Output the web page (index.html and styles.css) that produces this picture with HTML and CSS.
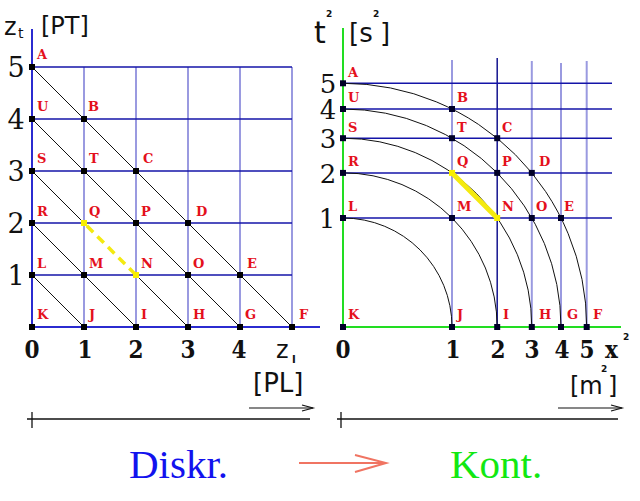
FILE: index.html
```html
<!DOCTYPE html>
<html lang="de">
<head>
<meta charset="utf-8">
<title>Diskr. → Kont.</title>
<link rel="stylesheet" href="styles.css">
</head>
<body>
<main class="figure">
<svg class="diagram" width="640" height="501" viewBox="0 0 640 501" xmlns="http://www.w3.org/2000/svg">
  <!-- ============ LEFT: discrete ============ -->
  <g class="left">
    <g class="vgrid">
      <line x1="84" y1="67" x2="84" y2="327"/>
      <line x1="136" y1="67" x2="136" y2="327"/>
      <line x1="188" y1="67" x2="188" y2="327"/>
      <line x1="240" y1="67" x2="240" y2="327"/>
      <line x1="292" y1="67" x2="292" y2="327"/>
    </g>
    <g class="hgrid">
      <line x1="32" y1="67" x2="292" y2="67"/>
      <line x1="32" y1="119" x2="292" y2="119"/>
      <line x1="32" y1="171" x2="292" y2="171"/>
      <line x1="32" y1="223" x2="292" y2="223"/>
      <line x1="32" y1="275" x2="292" y2="275"/>
    </g>
    <g class="axis-blue">
      <line x1="32" y1="29" x2="32" y2="328"/>
      <line x1="31" y1="327" x2="320" y2="327"/>
    </g>
    <g class="diag">
      <line x1="32" y1="275" x2="84" y2="327"/>
      <line x1="32" y1="223" x2="136" y2="327"/>
      <line x1="32" y1="171" x2="84" y2="223"/>
      <line x1="136" y1="275" x2="188" y2="327"/>
      <line x1="32" y1="119" x2="240" y2="327"/>
      <line x1="32" y1="67" x2="292" y2="327"/>
    </g>
    <line class="dash-yellow" x1="84" y1="223" x2="136" y2="275"/>
    <g class="pts">
      <rect x="29" y="64" width="6" height="6"/>
      <rect x="29" y="116" width="6" height="6"/>
      <rect x="81" y="116" width="6" height="6"/>
      <rect x="29" y="168" width="6" height="6"/>
      <rect x="81" y="168" width="6" height="6"/>
      <rect x="133" y="168" width="6" height="6"/>
      <rect x="29" y="220" width="6" height="6"/>
      <rect x="133" y="220" width="6" height="6"/>
      <rect x="185" y="220" width="6" height="6"/>
      <rect x="29" y="272" width="6" height="6"/>
      <rect x="81" y="272" width="6" height="6"/>
      <rect x="185" y="272" width="6" height="6"/>
      <rect x="237" y="272" width="6" height="6"/>
      <rect x="29" y="324" width="6" height="6"/>
      <rect x="81" y="324" width="6" height="6"/>
      <rect x="133" y="324" width="6" height="6"/>
      <rect x="185" y="324" width="6" height="6"/>
      <rect x="237" y="324" width="6" height="6"/>
      <rect x="289" y="324" width="6" height="6"/>
    </g>
    <g class="pts-yellow">
      <rect x="81" y="220" width="6" height="6"/>
      <rect x="133" y="272" width="6" height="6"/>
    </g>
    <g class="lbl">
      <text x="37" y="59">A</text>
      <text x="37" y="111">U</text>
      <text x="88" y="111">B</text>
      <text x="37" y="163">S</text>
      <text x="89" y="163">T</text>
      <text x="143" y="163">C</text>
      <text x="37" y="216">R</text>
      <text x="89" y="216">Q</text>
      <text x="141" y="216">P</text>
      <text x="196" y="216">D</text>
      <text x="37" y="268">L</text>
      <text x="89" y="268">M</text>
      <text x="141" y="268">N</text>
      <text x="193" y="268">O</text>
      <text x="247" y="268">E</text>
      <text x="37" y="319">K</text>
      <text x="89" y="319">J</text>
      <text x="141" y="319">I</text>
      <text x="193" y="319">H</text>
      <text x="245" y="319">G</text>
      <text x="299" y="319">F</text>
    </g>
    <g class="ynum">
      <text x="16" y="77">5</text>
      <text x="16" y="129">4</text>
      <text x="16" y="181">3</text>
      <text x="16" y="233">2</text>
      <text x="16" y="285">1</text>
    </g>
    <g class="xnum">
      <text x="32" y="358">0</text>
      <text x="85" y="358">1</text>
      <text x="136" y="358">2</text>
      <text x="188" y="358">3</text>
      <text x="239" y="358">4</text>
    </g>
    <text class="unit" x="4" y="35">z</text>
    <text class="sub" x="18" y="38">t</text>
    <text class="unit" x="41" y="34">[PT]</text>
    <text class="unit" x="276" y="358">z</text>
    <text class="sub-l" x="292" y="363">l</text>
    <text class="unit-lg" x="253" y="392">[PL]</text>
    <g class="small-arrow">
      <line x1="249" y1="408" x2="313" y2="408"/>
      <polyline points="302,405 313,408 302,411"/>
    </g>
    <g class="scale">
      <line x1="27" y1="419" x2="310" y2="419"/>
      <line x1="32" y1="412" x2="32" y2="428"/>
    </g>
  </g>

  <!-- ============ RIGHT: continuous ============ -->
  <g class="right">
    <g class="vgrid">
      <line x1="452" y1="60" x2="452" y2="327"/>
      <line x1="531.8" y1="61" x2="531.8" y2="327"/>
      <line x1="561" y1="63" x2="561" y2="327"/>
      <line x1="586.7" y1="61" x2="586.7" y2="327"/>
    </g>
    <line class="vgrid-dark" x1="497.2" y1="58" x2="497.2" y2="327"/>
    <g class="hgrid">
      <line x1="343" y1="83.3" x2="612" y2="83.3"/>
      <line x1="343" y1="109" x2="612" y2="109"/>
      <line x1="343" y1="138.2" x2="612" y2="138.2"/>
      <line x1="343" y1="172.9" x2="612" y2="172.9"/>
      <line x1="343" y1="218" x2="612" y2="218"/>
    </g>
    <g class="axis-green">
      <line x1="343" y1="28" x2="343" y2="328"/>
      <line x1="342" y1="327" x2="621" y2="327"/>
    </g>
    <g class="arc">
      <path d="M343 218 A109 109 0 0 1 452 327"/>
      <path d="M343 172.85 A154.15 154.15 0 0 1 497.15 327"/>
      <path d="M343 138.21 A188.79 188.79 0 0 1 531.79 327"/>
      <path d="M343 109 A218 218 0 0 1 561 327"/>
      <path d="M343 83.27 A243.73 243.73 0 0 1 586.73 327"/>
    </g>
    <line class="solid-yellow" x1="452" y1="172.9" x2="497.2" y2="218"/>
    <g class="pts">
      <rect x="340" y="80.3" width="6" height="6"/>
      <rect x="340" y="106" width="6" height="6"/>
      <rect x="449" y="106" width="6" height="6"/>
      <rect x="340" y="135.2" width="6" height="6"/>
      <rect x="449" y="135.2" width="6" height="6"/>
      <rect x="494.2" y="135.2" width="6" height="6"/>
      <rect x="340" y="169.9" width="6" height="6"/>
      <rect x="494.2" y="169.9" width="6" height="6"/>
      <rect x="528.8" y="169.9" width="6" height="6"/>
      <rect x="340" y="215" width="6" height="6"/>
      <rect x="449" y="215" width="6" height="6"/>
      <rect x="528.8" y="215" width="6" height="6"/>
      <rect x="558" y="215" width="6" height="6"/>
      <rect x="340" y="324" width="6" height="6"/>
      <rect x="449" y="324" width="6" height="6"/>
      <rect x="494.2" y="324" width="6" height="6"/>
      <rect x="528.8" y="324" width="6" height="6"/>
      <rect x="558" y="324" width="6" height="6"/>
      <rect x="583.7" y="324" width="6" height="6"/>
    </g>
    <g class="pts-yellow">
      <rect x="449" y="169.9" width="6" height="6"/>
      <rect x="494.2" y="215" width="6" height="6"/>
    </g>
    <g class="lbl">
      <text x="348" y="77">A</text>
      <text x="348" y="102">U</text>
      <text x="457" y="102">B</text>
      <text x="348" y="132">S</text>
      <text x="457" y="132">T</text>
      <text x="502" y="132">C</text>
      <text x="348" y="166">R</text>
      <text x="457" y="166">Q</text>
      <text x="502" y="166">P</text>
      <text x="539" y="166">D</text>
      <text x="348" y="211">L</text>
      <text x="457" y="211">M</text>
      <text x="502" y="211">N</text>
      <text x="536" y="211">O</text>
      <text x="564" y="211">E</text>
      <text x="348" y="319">K</text>
      <text x="457" y="319">J</text>
      <text x="503" y="319">I</text>
      <text x="539" y="319">H</text>
      <text x="567" y="319">G</text>
      <text x="593" y="319">F</text>
    </g>
    <g class="ynum ynum-r">
      <text x="328" y="93">5</text>
      <text x="328" y="119">4</text>
      <text x="328" y="148">3</text>
      <text x="328" y="183">2</text>
      <text x="327" y="228">1</text>
    </g>
    <g class="xnum">
      <text x="343" y="358">0</text>
      <text x="453" y="358">1</text>
      <text x="498" y="358">2</text>
      <text x="532" y="358">3</text>
      <text x="562" y="358">4</text>
      <text x="587" y="358">5</text>
    </g>
    <text class="xvar" x="605" y="358">x</text>
    <text class="sup" x="623" y="340">2</text>
    <text class="unit-t" x="314" y="43">t</text>
    <text class="sup" x="326" y="17">2</text>
    <text class="unit-lg" x="349" y="42">[s</text>
    <text class="sup" x="373" y="17">2</text>
    <text class="unit-lg" x="380" y="42">]</text>
    <text class="unit-m" x="570" y="394">[m</text>
    <text class="sup" x="601" y="372">2</text>
    <text class="unit-m" x="608" y="394">]</text>
    <g class="small-arrow">
      <line x1="558" y1="408" x2="622" y2="408"/>
      <polyline points="611,405 622,408 611,411"/>
    </g>
    <g class="scale">
      <line x1="337" y1="419" x2="618" y2="419"/>
      <line x1="341" y1="412" x2="341" y2="428"/>
    </g>
  </g>

  <!-- ============ caption ============ -->
  <text class="cap cap-blue" x="129" y="478">Diskr.</text>
  <g class="big-arrow">
    <line x1="299" y1="463" x2="385" y2="463"/>
    <polyline points="355,455 386,463 355,472"/>
  </g>
  <text class="cap cap-green" x="450" y="478">Kont.</text>
</svg>
</main>
</body>
</html>
```

FILE: styles.css
```css
html, body {
  margin: 0;
  padding: 0;
  background: #ffffff;
}

.figure {
  display: block;
  width: 640px;
  height: 501px;
  overflow: hidden;
}

.diagram {
  display: block;
}

.vgrid line {
  stroke: #9a9ae0;
  stroke-width: 2;
}

.vgrid-dark {
  stroke: #14148f;
  stroke-width: 1.5;
}

.hgrid line {
  stroke: #1414a8;
  stroke-width: 1.5;
}

.axis-blue line {
  stroke: #2b2bd0;
  stroke-width: 2;
}

.axis-green line {
  stroke: #22dd22;
  stroke-width: 2;
}

.diag line,
.arc path {
  stroke: #111111;
  stroke-width: 1;
  fill: none;
}

.dash-yellow {
  stroke: #f4ea10;
  stroke-width: 3.5;
  stroke-dasharray: 9 6;
  stroke-dashoffset: -4;
}

.solid-yellow {
  stroke: #f4ea10;
  stroke-width: 5;
}

.pts rect {
  fill: #000000;
}

.right .pts rect {
  fill: #000028;
}

.pts-yellow rect {
  fill: #f8ee00;
}

.lbl text {
  font-family: "DejaVu Serif", serif;
  font-weight: bold;
  font-size: 13px;
  fill: #e4101c;
}

.ynum text {
  font-family: "DejaVu Serif", serif;
  font-size: 27px;
  fill: #111111;
  text-anchor: middle;
}

.ynum-r text {
  font-size: 26px;
}

.xnum text,
.xvar {
  font-family: "DejaVu Serif", serif;
  font-weight: bold;
  font-stretch: condensed;
  font-size: 24px;
  fill: #111111;
}

.xnum text {
  text-anchor: middle;
}

.unit {
  font-family: "DejaVu Sans", sans-serif;
  font-size: 24px;
  fill: #111111;
}

.unit-lg {
  font-family: "DejaVu Sans", sans-serif;
  font-size: 26px;
  fill: #111111;
}

.unit-t {
  font-family: "DejaVu Sans", sans-serif;
  font-size: 30px;
  fill: #111111;
}

.unit-m {
  font-family: "DejaVu Sans", sans-serif;
  font-size: 24px;
  fill: #111111;
}

.sub {
  font-family: "DejaVu Sans", sans-serif;
  font-size: 14px;
  fill: #111111;
}

.sub-l {
  font-family: "DejaVu Sans", sans-serif;
  font-weight: bold;
  font-size: 11px;
  fill: #111111;
}

.sup {
  font-family: "DejaVu Sans", sans-serif;
  font-weight: bold;
  font-size: 9px;
  fill: #111111;
}

.small-arrow line,
.small-arrow polyline {
  stroke: #111111;
  stroke-width: 1.2;
  fill: none;
}

.scale line {
  stroke: #111111;
  stroke-width: 1.3;
}

.cap {
  font-family: "Liberation Serif", "Times New Roman", serif;
  font-size: 41px;
}

.cap-blue {
  fill: #1212ee;
}

.cap-green {
  fill: #12e812;
}

.big-arrow line,
.big-arrow polyline {
  stroke: #f07462;
  stroke-width: 2;
  fill: none;
}
```
